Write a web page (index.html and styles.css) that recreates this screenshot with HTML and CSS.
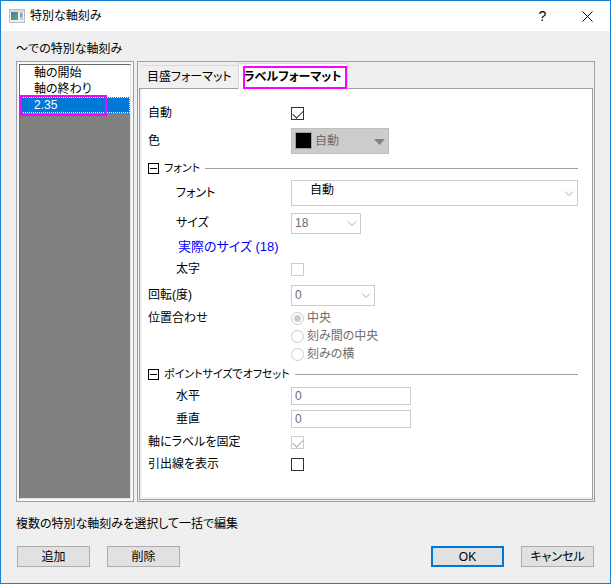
FILE: index.html
```html
<!DOCTYPE html>
<html lang="ja">
  <head>
    <meta charset="UTF-8" />
    <title>特別な軸刻み</title>
    <link rel="stylesheet" href="styles.css">
  </head>
  <body>
    <div class="dialog">
      <header class="titlebar">
        <svg class="app-icon" width="16" height="14" viewBox="0 0 16 14">
          <defs>
            <linearGradient id="screen" x1="0" y1="0" x2="1" y2="1">
              <stop offset="0" stop-color="#4f74b8" />
              <stop offset="1" stop-color="#4fae6a" />
            </linearGradient>
          </defs>
          <rect x="0.5" y="0.5" width="15" height="13" fill="#eef1f4" stroke="#b4bcc4" />
          <rect x="1" y="1" width="14" height="2" fill="#d3dae1" />
          <rect x="2" y="3" width="7" height="8" fill="url(#screen)" />
          <rect x="11" y="3" width="3" height="8" fill="#c3ccd6" />
          <rect x="11" y="4" width="2" height="4" fill="#8e9bab" />
        </svg>
        <h1 class="title">特別な軸刻み</h1>
        <button class="title-btn" type="button" aria-label="ヘルプ">?</button>
        <button class="title-btn" type="button" aria-label="閉じる">
          <svg width="11" height="11" viewBox="0 0 11 11">
            <path d="M0.5 0.5L10.5 10.5M10.5 0.5L0.5 10.5" stroke="#000" fill="none" />
          </svg>
        </button>
      </header>

      <main class="content">
        <p class="caption">～での特別な軸刻み</p>

        <div class="panels">
          <div class="list-frame">
            <ul class="tick-list" role="listbox">
              <li role="option">軸の開始</li>
              <li role="option">軸の終わり</li>
              <li role="option" class="selected" aria-selected="true">2.35</li>
            </ul>
          </div>

          <div class="tab-frame">
            <div class="tabs" role="tablist">
              <button class="tab" type="button" role="tab">目盛フォーマット</button>
              <button class="tab active" type="button" role="tab" aria-selected="true">ラベルフォーマット</button>
            </div>

            <form class="pane">
              <div class="row">
                <label for="auto">自動</label>
                <input type="checkbox" id="auto" checked />
              </div>
              <div class="row tall">
                <label for="color">色</label>
                <div class="dropdown color">
                  <select id="color" disabled><option>自動</option></select>
                  <span class="swatch"></span>
                  <svg class="arrow" width="11" height="6" viewBox="0 0 11 6"><path d="M0 0H11L5.5 6Z" fill="#838383" /></svg>
                </div>
              </div>

              <div class="group">
                <button class="toggle" type="button" aria-label="フォントを折りたたむ"></button>
                <span>フォント</span>
              </div>
              <div class="row medium sub">
                <label for="font">フォント</label>
                <div class="dropdown font">
                  <select id="font"><option>自動</option></select>
                  <svg class="arrow" width="10" height="6" viewBox="0 0 10 6"><path d="M1 0.5L5 4.5L9 0.5" stroke="#aaa" fill="none" /></svg>
                </div>
              </div>
              <div class="row tall sub">
                <label for="size">サイズ</label>
                <div class="dropdown size">
                  <select id="size" disabled><option>18</option></select>
                  <svg class="arrow" width="10" height="6" viewBox="0 0 10 6"><path d="M1 0.5L5 4.5L9 0.5" stroke="#aaa" fill="none" /></svg>
                </div>
              </div>
              <p class="actual-size">実際のサイズ (18)</p>
              <div class="row medium sub">
                <label for="bold">太字</label>
                <input type="checkbox" id="bold" disabled />
              </div>
              <div class="row">
                <label for="rotation">回転(度)</label>
                <div class="dropdown rotation">
                  <select id="rotation" disabled><option>0</option></select>
                  <svg class="arrow" width="10" height="6" viewBox="0 0 10 6"><path d="M1 0.5L5 4.5L9 0.5" stroke="#aaa" fill="none" /></svg>
                </div>
              </div>
              <div class="row align" role="radiogroup" aria-labelledby="align-label">
                <span id="align-label">位置合わせ</span>
                <div class="radios">
                  <label><input type="radio" name="align" checked disabled />中央</label>
                  <label><input type="radio" name="align" disabled />刻み間の中央</label>
                  <label><input type="radio" name="align" disabled />刻みの横</label>
                </div>
              </div>

              <div class="group">
                <button class="toggle" type="button" aria-label="オフセットを折りたたむ"></button>
                <span>ポイントサイズでオフセット</span>
              </div>
              <div class="row short sub">
                <label for="horizontal">水平</label>
                <input type="text" id="horizontal" value="0" disabled />
              </div>
              <div class="row sub">
                <label for="vertical">垂直</label>
                <input type="text" id="vertical" value="0" disabled />
              </div>
              <div class="row short">
                <label for="lock">軸にラベルを固定</label>
                <input type="checkbox" id="lock" checked disabled />
              </div>
              <div class="row short">
                <label for="leader">引出線を表示</label>
                <input type="checkbox" id="leader" />
              </div>
            </form>
          </div>
        </div>

        <p class="hint">複数の特別な軸刻みを選択して一括で編集</p>

        <footer class="buttons">
          <button class="btn" type="button">追加</button>
          <button class="btn" type="button">削除</button>
          <button class="btn primary" type="button">OK</button>
          <button class="btn" type="button">キャンセル</button>
        </footer>
      </main>
    </div>
  </body>
</html>
```
FILE: styles.css
```css
* {
  box-sizing: border-box;
}
body {
  margin: 0;
  font-family: "Liberation Sans", "Noto Sans CJK JP", sans-serif;
  font-size: 12px;
  line-height: 16px;
  font-feature-settings: "palt";
  color: #000;
}
button,
input,
select {
  font: inherit;
  font-feature-settings: inherit;
  color: inherit;
  margin: 0;
  padding: 0;
}
p,
h1,
ul {
  margin: 0;
  padding: 0;
}
.dialog {
  display: flex;
  flex-direction: column;
  min-height: 100vh;
  background: #efefef;
  border: 1px solid #1a7fd6;
}

/* title bar */
.titlebar {
  display: flex;
  align-items: center;
  height: 30px;
  padding-left: 8px;
  background: #fff;
}
.title {
  flex: 1;
  margin-left: 5px;
  font-size: 12px;
  font-weight: normal;
}
.title-btn {
  display: flex;
  align-items: center;
  justify-content: center;
  width: 45px;
  height: 30px;
  border: none;
  background: none;
  font-size: 14px;
}

/* content */
.content {
  flex: 1;
  display: flex;
  flex-direction: column;
  padding: 10px 15px 16px;
}
.panels {
  flex: 1;
  display: flex;
  gap: 3px;
  margin-top: 4px;
}

/* list on the left */
.list-frame {
  display: flex;
  width: 118px;
  padding: 2px;
  border: 1px solid #a0a0a0;
  background: #f8f8f8;
}
.tick-list {
  flex: 1;
  list-style: none;
  background: #808080;
  border: 1px solid #696969;
  border-right-color: #e3e3e3;
  border-bottom-color: #e3e3e3;
}
.tick-list li {
  height: 16px;
  padding-left: 14px;
  background: #fff;
}
.tick-list .selected {
  position: relative;
  background: #0078d7;
  color: #fff;
  outline: 1px dotted #fff;
  outline-offset: -1px;
}
.tick-list .selected::after {
  content: "";
  position: absolute;
  inset: -2px 23px -3px 0;
  border: 2px solid #ff00ff;
}

/* tabs */
.tab-frame {
  flex: 1;
  display: flex;
  flex-direction: column;
  padding: 1px;
  border: 1px solid #a0a0a0;
}
.tabs {
  display: flex;
  align-items: flex-end;
  height: 25px;
  padding-left: 2px;
}
.tab {
  height: 23px;
  padding: 0 6px;
  border: 1px solid #d9d9d9;
  border-width: 1px 0 0;
  background: #f0f0f0;
  white-space: nowrap;
}
.tab.active {
  position: relative;
  height: 26px;
  margin-bottom: -1px;
  padding: 0 5px;
  border-width: 1px 1px 0;
  background: #fff;
  font-weight: bold;
}
.tab.active::after {
  content: "";
  position: absolute;
  inset: 2px 0 0 4px;
  border: 2px solid #ff00ff;
}
.pane {
  flex: 1;
  padding: 12px 14px 4px 8px;
  border: 1px solid #a0a0a0;
  box-shadow: inset 2px -2px #f0f0fb;
  background: #fff;
}

/* form rows */
.row {
  display: grid;
  grid-template-columns: 143px 1fr;
  align-items: center;
  justify-items: start;
  height: 24px;
}
.row.short {
  height: 22px;
}
.row.medium {
  height: 28px;
}
.row.tall {
  height: 32px;
}
.row.sub > label {
  padding-left: 28px;
}
.row.align {
  height: auto;
  align-items: start;
  padding-top: 2px;
}
.row.align > span {
  line-height: 18px;
}
.actual-size {
  padding-left: 30px;
  font-size: 13px;
  color: #0000ff;
}
.group {
  display: flex;
  align-items: center;
  gap: 5px;
  height: 22px;
  font-size: 11px;
}
.group::after {
  content: "";
  flex: 1;
  height: 1px;
  background: #a0a0a0;
}
.toggle {
  position: relative;
  width: 11px;
  height: 11px;
  border: 1px solid #000;
  background: #fff;
}
.toggle::before {
  content: "";
  position: absolute;
  inset: 4px 1px;
  background: #000;
}

/* controls */
input[type="checkbox"],
input[type="radio"] {
  appearance: none;
  width: 13px;
  height: 13px;
  border: 1px solid #333;
  background: #fff;
}
input[type="checkbox"]:disabled,
input[type="radio"]:disabled {
  border-color: #ccc;
}
input[type="checkbox"]:checked::before {
  content: "";
  display: block;
  width: 9px;
  height: 5px;
  margin: 2px 1px;
  border: solid #333;
  border-width: 0 0 1px 1px;
  transform: rotate(-45deg);
}
input[type="checkbox"]:checked:disabled::before {
  border-color: #aaa;
}
input[type="radio"] {
  border-radius: 50%;
}
input[type="radio"]:checked::before {
  content: "";
  display: block;
  width: 7px;
  height: 7px;
  margin: 2px;
  border-radius: 50%;
  background: #ccc;
}
.radios label {
  display: flex;
  align-items: center;
  gap: 3px;
  height: 18px;
  color: #6d6d6d;
}
input[type="text"] {
  width: 120px;
  height: 18px;
  padding-left: 3px;
  border: 1px solid #ccc;
  background: #fff;
}
input:disabled,
select:disabled {
  color: #6d6d6d;
  opacity: 1;
}
.dropdown {
  position: relative;
}
.dropdown select {
  appearance: none;
  display: block;
  width: 100%;
  height: 21px;
  padding-left: 3px;
  border: 1px solid #ccc;
  border-radius: 0;
  background: #fff;
}
.dropdown .arrow {
  position: absolute;
  top: 50%;
  right: 4px;
  margin-top: -2px;
}
.dropdown.color {
  width: 98px;
}
.dropdown.color select {
  height: 26px;
  padding-left: 23px;
  border-color: #bfbfbf;
  background: #ccc;
}
.swatch {
  position: absolute;
  top: 4px;
  left: 4px;
  width: 17px;
  height: 17px;
  background: #000;
  border: 1px solid #a0a0a0;
}
.dropdown.font {
  width: 100%;
}
.dropdown.font select {
  height: 26px;
  padding: 0 0 6px 18px;
}
.dropdown.size {
  width: 70px;
}
.dropdown.rotation {
  width: 84px;
}

/* bottom buttons */
.hint {
  margin-top: 14px;
}
.buttons {
  display: flex;
  gap: 17px;
  margin-top: 14px;
  padding: 0 1px;
}
.btn {
  width: 73px;
  height: 21px;
  border: 1px solid #adadad;
  background: #e1e1e1;
}
.btn.primary {
  margin-left: auto;
  border: 2px solid #0078d7;
}
```
